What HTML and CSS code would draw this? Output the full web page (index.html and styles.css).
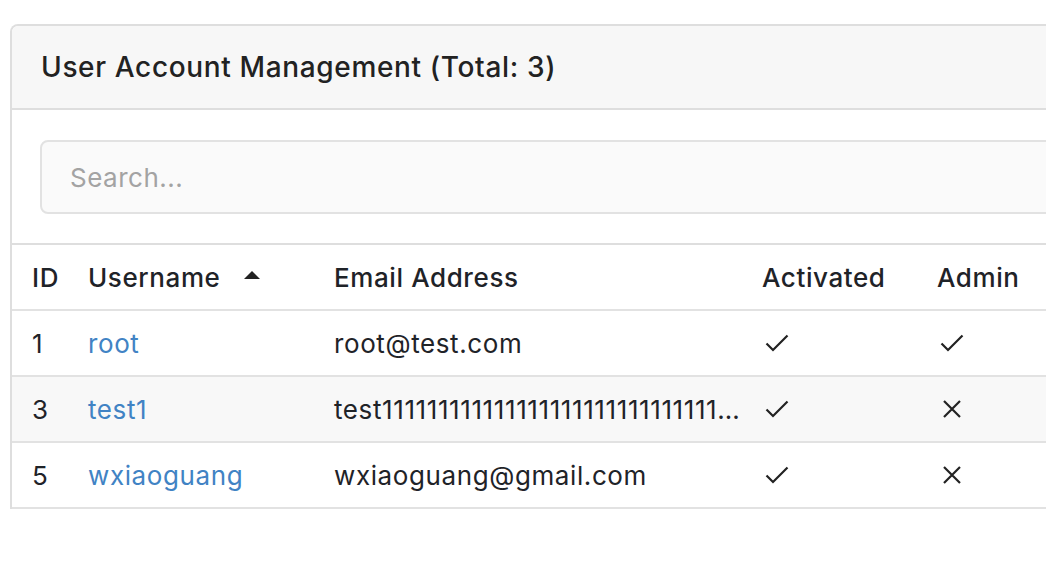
FILE: index.html
```html
<!DOCTYPE html>
<html>
<head>
<meta charset="utf-8">
<link rel="stylesheet" href="styles.css">
</head>
<body>
<div class="card">
  <div class="card-header">User Account Management (Total: 3)</div>
  <div class="search-area">
    <input class="search" type="text" placeholder="Search...">
  </div>
  <div class="table">
    <div class="row head">
      <div class="cell c-id">ID</div>
      <div class="cell c-name">Username <span class="sort"></span></div>
      <div class="cell c-email">Email Address</div>
      <div class="cell c-act">Activated</div>
      <div class="cell c-admin">Admin</div>
    </div>
    <div class="row">
      <div class="cell c-id">1</div>
      <div class="cell c-name"><a href="#">root</a></div>
      <div class="cell c-email">root@test.com</div>
      <div class="cell c-act"><svg class="ico" viewBox="0 0 24 18"><polyline points="1.5,9.5 8,16 22.5,1.5"/></svg></div>
      <div class="cell c-admin"><svg class="ico" viewBox="0 0 24 18"><polyline points="1.5,9.5 8,16 22.5,1.5"/></svg></div>
    </div>
    <div class="row stripe">
      <div class="cell c-id">3</div>
      <div class="cell c-name"><a href="#">test1</a></div>
      <div class="cell c-email">test1111111111111111111111111111111111111111111111111@test.com</div>
      <div class="cell c-act"><svg class="ico" viewBox="0 0 24 18"><polyline points="1.5,9.5 8,16 22.5,1.5"/></svg></div>
      <div class="cell c-admin"><svg class="ico x" viewBox="0 0 18 18"><path d="M1 1 L17 17 M17 1 L1 17"/></svg></div>
    </div>
    <div class="row">
      <div class="cell c-id">5</div>
      <div class="cell c-name"><a href="#">wxiaoguang</a></div>
      <div class="cell c-email">wxiaoguang@gmail.com</div>
      <div class="cell c-act"><svg class="ico" viewBox="0 0 24 18"><polyline points="1.5,9.5 8,16 22.5,1.5"/></svg></div>
      <div class="cell c-admin"><svg class="ico x" viewBox="0 0 18 18"><path d="M1 1 L17 17 M17 1 L1 17"/></svg></div>
    </div>
  </div>
</div>
</body>
</html>
```

FILE: styles.css
```css
html, body {
  margin: 0;
  padding: 0;
  background: #fff;
  overflow: hidden;
}
body {
  padding: 24px 0 0 10px;
  font-family: Inter, "Noto Sans", sans-serif;
  color: #1f2328;
}
.card {
  width: 1100px;
  border: 2px solid #dedede;
  border-bottom: none;
  border-radius: 8px 8px 0 0;
  box-sizing: border-box;
}
.card-header {
  background: #f7f7f7;
  height: 82px;
  border-bottom: 2px solid #dedede;
  border-radius: 6px 6px 0 0;
  padding-left: 29px;
  display: flex;
  align-items: center;
  font-size: 28px;
  letter-spacing: 0.65px;
  font-weight: 500;
  color: #222;
}
.search-area {
  padding: 30px 0 29px 28px;
}
.search {
  display: block;
  box-sizing: border-box;
  width: 1100px;
  height: 74px;
  border: 2px solid #e2e2e2;
  border-radius: 8px;
  background: #fafafa;
  padding: 0 0 0 28px;
  font-family: inherit;
  font-size: 26px;
  letter-spacing: 0.5px;
  color: #222;
  outline: none;
}
.search::placeholder {
  color: #a3a3a3;
}
.table {
  border-top: 2px solid #dedede;
}
.row {
  display: flex;
  height: 64px;
  align-items: center;
  border-bottom: 2px solid #e2e2e2;
  font-size: 26px;
  letter-spacing: 0.6px;
}
.row.head {
  font-weight: 500;
}
.row.stripe {
  background: #f8f8f8;
}
.cell {
  box-sizing: border-box;
  padding-left: 12px;
  white-space: nowrap;
  display: flex;
  align-items: center;
}
.c-id { width: 64px; padding-left: 20px; }
.c-name { width: 246px; }
.c-email { width: 428px; padding-right: 0; display: block; overflow: hidden; text-overflow: ellipsis; }
.c-act { width: 175px; padding-left: 15px; }
.c-admin { flex: 1; padding-left: 15px; }
.row.head .c-act, .row.head .c-admin { padding-left: 12px; }
a {
  color: #4183c4;
  text-decoration: none;
}
.sort {
  width: 0;
  height: 0;
  border-left: 8px solid transparent;
  border-right: 8px solid transparent;
  border-bottom: 8px solid #222;
  margin-left: 24px;
  margin-top: -4px;
}
.ico {
  width: 24px;
  height: 18px;
  fill: none;
  stroke: #222;
  stroke-width: 2.2;
}
.ico.x {
  width: 18px;
  height: 18px;
  margin-left: 3px;
}
```
